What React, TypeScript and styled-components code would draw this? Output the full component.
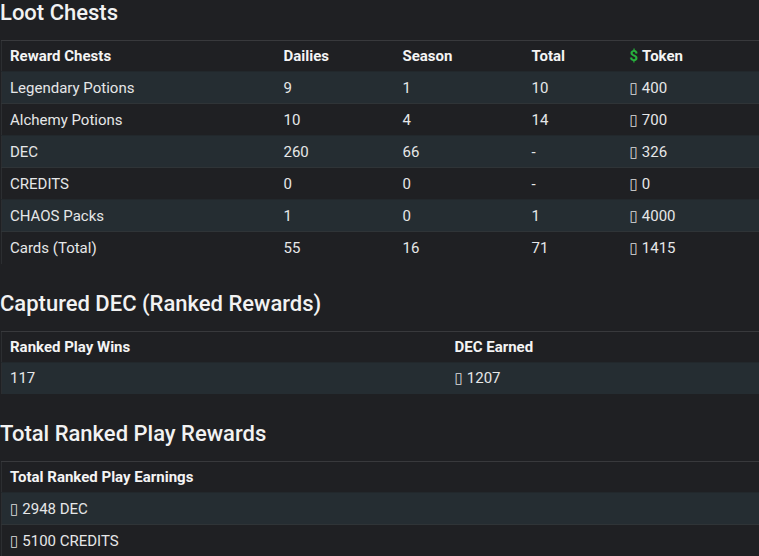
import React from "react";
import styled, { createGlobalStyle } from "styled-components";

const Global = createGlobalStyle`
  html, body {
    margin: 0;
    padding: 0;
    background: #1f2023;
    overflow: hidden;
  }
  body {
    font-family: Roboto, "Liberation Sans", Arial, sans-serif;
    color: #e4e5e6;
  }
`;

const Page = styled.div`
  width: 759px;
`;

const Heading = styled.h2`
  margin: 0 0 14px;
  font-size: 22px;
  line-height: 26px;
  font-weight: 500;
  color: #f2f2f2;
`;

const Table = styled.table`
  margin: 0 0 27px 1px;
  width: 758px;
  table-layout: fixed;
  border-collapse: collapse;
  border-top: 1px solid #38393c;
  border-left: 1px solid #2c2e31;
  font-size: 15px;
`;

const HeadCell = styled.th<{ $w?: number }>`
  ${(p) => (p.$w ? `width: ${p.$w}px;` : "")}
  height: 31px;
  padding: 0 8px;
  text-align: left;
  font-weight: 700;
  color: #f4f4f4;
  box-sizing: border-box;
  white-space: nowrap;
`;

const Row = styled.tr<{ $striped?: boolean }>`
  height: 32px;
  background: ${(p) => (p.$striped ? "#252d32" : "transparent")};
  border-top: 1px solid ${(p) => (p.$striped ? "#22282c" : "#2f3437")};
`;

const Cell = styled.td`
  padding: 0 8px;
  color: #e6e7e8;
  font-weight: 400;
  white-space: nowrap;
`;

const Dollar = styled.span`
  color: #27b33e;
  font-weight: 700;
  margin-right: 4px;
`;

const Tofu = styled.span`
  font-family: "DejaVu Sans", sans-serif;
  font-size: 15px;
  font-weight: 400;
  color: #dedede;
  margin-right: 4px;
`;

const lootRows = [
  ["Legendary Potions", "9", "1", "10", "400"],
  ["Alchemy Potions", "10", "4", "14", "700"],
  ["DEC", "260", "66", "-", "326"],
  ["CREDITS", "0", "0", "-", "0"],
  ["CHAOS Packs", "1", "0", "1", "4000"],
  ["Cards (Total)", "55", "16", "71", "1415"],
];

const Token: React.FC<{ v: string }> = ({ v }) => (
  <>
    <Tofu>▯</Tofu>
    {v}
  </>
);

export default function App() {
  return (
    <>
      <Global />
      <Page>
        <Heading>Loot Chests</Heading>
        <Table>
          <thead>
            <tr>
              <HeadCell $w={274}>Reward Chests</HeadCell>
              <HeadCell $w={119}>Dailies</HeadCell>
              <HeadCell $w={129}>Season</HeadCell>
              <HeadCell $w={98}>Total</HeadCell>
              <HeadCell>
                <Dollar>$</Dollar>Token
              </HeadCell>
            </tr>
          </thead>
          <tbody>
            {lootRows.map((r, i) => (
              <Row key={r[0]} $striped={i % 2 === 0}>
                <Cell>{r[0]}</Cell>
                <Cell>{r[1]}</Cell>
                <Cell>{r[2]}</Cell>
                <Cell>{r[3]}</Cell>
                <Cell>
                  <Token v={r[4]} />
                </Cell>
              </Row>
            ))}
          </tbody>
        </Table>

        <Heading>Captured DEC (Ranked Rewards)</Heading>
        <Table>
          <thead>
            <tr>
              <HeadCell $w={445}>Ranked Play Wins</HeadCell>
              <HeadCell>DEC Earned</HeadCell>
            </tr>
          </thead>
          <tbody>
            <Row $striped>
              <Cell>117</Cell>
              <Cell>
                <Token v="1207" />
              </Cell>
            </Row>
          </tbody>
        </Table>

        <Heading>Total Ranked Play Rewards</Heading>
        <Table>
          <thead>
            <tr>
              <HeadCell>Total Ranked Play Earnings</HeadCell>
            </tr>
          </thead>
          <tbody>
            <Row $striped>
              <Cell>
                <Token v="2948 DEC" />
              </Cell>
            </Row>
            <Row>
              <Cell>
                <Token v="5100 CREDITS" />
              </Cell>
            </Row>
          </tbody>
        </Table>
      </Page>
    </>
  );
}
